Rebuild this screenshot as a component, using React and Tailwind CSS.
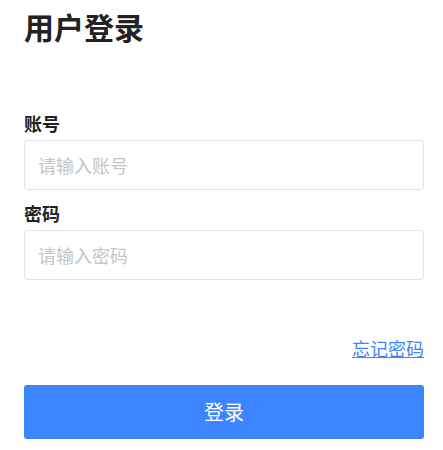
import { useState } from "react";

const font = { fontFamily: '"Noto Sans CJK SC", "Noto Sans", sans-serif' };

function Field({ label, placeholder, type = "text", value, onChange, className = "" }) {
  return (
    <div className={className}>
      <label className="block text-[18px] leading-[24px] font-bold text-[#222] mb-[5px]">
        {label}
      </label>
      <input
        type={type}
        placeholder={placeholder}
        value={value}
        onChange={(e) => onChange(e.target.value)}
        className="block w-full h-[50px] px-[13px] border border-[#e2e2e2] rounded-[3px] text-[18px] text-[#333] outline-none placeholder:text-[#c4c4c4] bg-white"
        style={font}
      />
    </div>
  );
}

export default function App() {
  const [account, setAccount] = useState("");
  const [password, setPassword] = useState("");

  return (
    <div className="min-h-screen bg-white pl-[24px] pr-[19px] pt-[8px]" style={font}>
      {/* Title */}
      <h1 className="text-[30px] leading-[36px] font-bold text-[#222]">用户登录</h1>

      {/* Form */}
      <div className="mt-[67px]">
        <Field label="账号" placeholder="请输入账号" value={account} onChange={setAccount} />
        <Field
          label="密码"
          placeholder="请输入密码"
          type="password"
          value={password}
          onChange={setPassword}
          className="mt-[11px]"
        />
      </div>

      <div className="flex justify-end mt-[56px]">
        <a href="#" className="text-[18px] leading-[24px] text-[#3d85fe] underline">
          忘记密码
        </a>
      </div>

      <button className="mt-[25px] w-full h-[54px] rounded-[3px] bg-[#3d85fe] text-white text-[20px]">
        登录
      </button>
    </div>
  );
}
